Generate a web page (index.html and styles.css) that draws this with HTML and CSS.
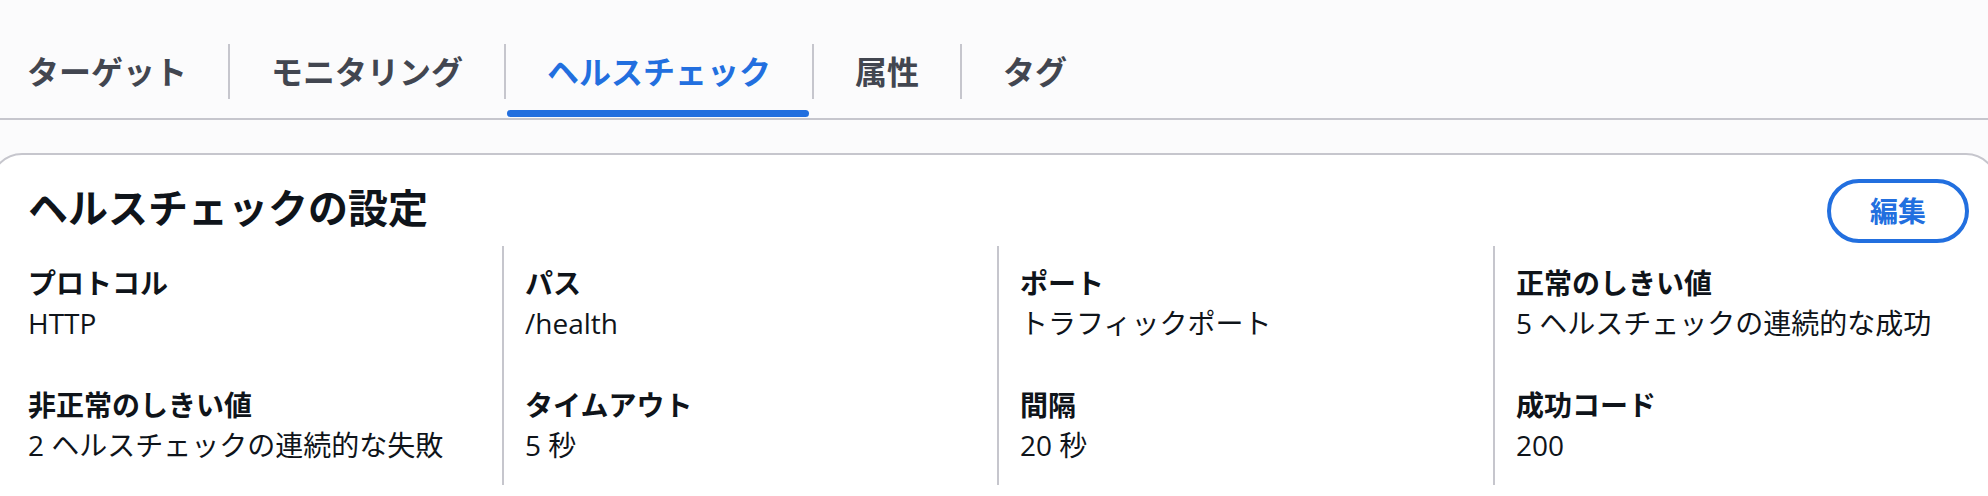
FILE: index.html
```html
<!DOCTYPE html>
<html lang="ja">
<head>
<meta charset="utf-8">
<title>ヘルスチェック</title>
<link rel="stylesheet" href="styles.css">
</head>
<body>
<div class="page">
  <nav class="tabs">
    <div class="tab"><span class="tab-label">ターゲット</span><span class="indicator"></span></div>
    <div class="tab"><span class="tab-label">モニタリング</span><span class="indicator"></span></div>
    <div class="tab active"><span class="tab-label">ヘルスチェック</span><span class="indicator"></span></div>
    <div class="tab"><span class="tab-label">属性</span><span class="indicator"></span></div>
    <div class="tab"><span class="tab-label">タグ</span><span class="indicator"></span></div>
  </nav>
  <section class="card">
    <header class="card-header">
      <h2 class="card-title">ヘルスチェックの設定</h2>
      <button class="btn" type="button">編集</button>
    </header>
    <div class="columns">
      <div class="col">
        <div class="kv"><div class="k">プロトコル</div><div class="v">HTTP</div></div>
        <div class="kv"><div class="k">非正常のしきい値</div><div class="v">2 ヘルスチェックの連続的な失敗</div></div>
      </div>
      <div class="col">
        <div class="kv"><div class="k">パス</div><div class="v">/health</div></div>
        <div class="kv"><div class="k">タイムアウト</div><div class="v">5 秒</div></div>
      </div>
      <div class="col">
        <div class="kv"><div class="k">ポート</div><div class="v">トラフィックポート</div></div>
        <div class="kv"><div class="k">間隔</div><div class="v">20 秒</div></div>
      </div>
      <div class="col">
        <div class="kv"><div class="k">正常のしきい値</div><div class="v">5 ヘルスチェックの連続的な成功</div></div>
        <div class="kv"><div class="k">成功コード</div><div class="v">200</div></div>
      </div>
    </div>
  </section>
</div>
</body>
</html>
```

FILE: styles.css
```css
html, body {
  margin: 0;
  padding: 0;
  background: #fbfbfc;
  overflow: hidden;
}

body {
  font-family: "Open Sans", "Noto Sans CJK JP", sans-serif;
  color: #0f141a;
}

.page {
  width: 1988px;
}

.tabs {
  display: flex;
  padding: 44px 0 0 27px;
  border-bottom: 2px solid #c6c6cd;
}

.tab {
  display: flex;
  flex-direction: column;
  padding-bottom: 1px;
}

.tab-label {
  display: block;
  padding: 0 41px;
  height: 55px;
  line-height: 55px;
  font-size: 32px;
  font-weight: 700;
  color: #424650;
  border-right: 2px solid #c6c6cd;
  white-space: nowrap;
}

.tab:first-child .tab-label {
  padding-left: 0;
}

.tab:last-child .tab-label {
  border-right: none;
}

.indicator {
  display: block;
  height: 7px;
  margin: 11px 5px 0 1px;
  border-radius: 4px;
  background: transparent;
}

.tab.active .tab-label {
  color: #226fdf;
}

.tab.active .indicator {
  background: #226fdf;
}

.card {
  margin: 33px -10px 0;
  border: 2px solid #c6c6cd;
  border-radius: 32px;
  background: #ffffff;
  padding: 24px 27px 40px 36px;
}

.card-header {
  display: flex;
  justify-content: space-between;
  align-items: center;
  height: 64px;
}

.card-title {
  margin: 0 0 6px;
  font-size: 40px;
  line-height: 48px;
  font-weight: 700;
  color: #0f141a;
}

.btn {
  font-family: inherit;
  font-size: 28px;
  line-height: 40px;
  font-weight: 700;
  color: #226fdf;
  background: #ffffff;
  border: 4px solid #226fdf;
  border-radius: 32px;
  padding: 8px 39px;
  margin: 0;
}

.columns {
  display: grid;
  grid-template-columns: 474px 495px 496px 1fr;
  margin-top: 3px;
}

.col {
  display: flex;
  flex-direction: column;
  gap: 42px;
  padding: 17px 0 20px;
}

.col + .col {
  border-left: 2px solid #c6c6cd;
  padding-left: 21px;
}

.k {
  font-size: 28px;
  line-height: 40px;
  font-weight: 700;
}

.v {
  font-size: 28px;
  line-height: 40px;
  font-weight: 400;
}
```
